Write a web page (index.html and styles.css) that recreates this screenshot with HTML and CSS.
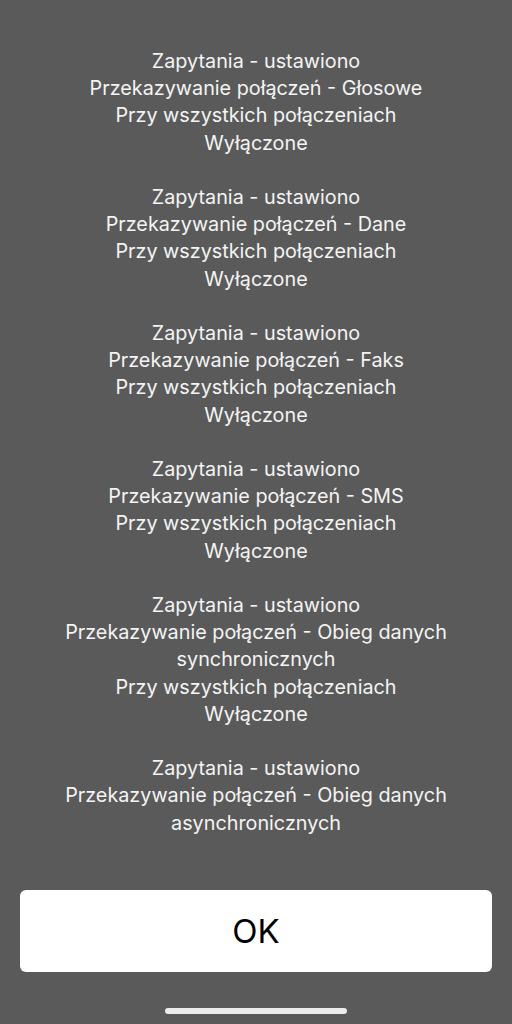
FILE: index.html
```html
<!DOCTYPE html>
<html lang="pl">
<head>
<meta charset="utf-8">
<link rel="stylesheet" href="styles.css">
</head>
<body>
<div class="screen">
  <div class="message">
    <p>Zapytania - ustawiono<br>Przekazywanie połączeń - Głosowe<br>Przy wszystkich połączeniach<br>Wyłączone</p>
    <p>Zapytania - ustawiono<br>Przekazywanie połączeń - Dane<br>Przy wszystkich połączeniach<br>Wyłączone</p>
    <p>Zapytania - ustawiono<br>Przekazywanie połączeń - Faks<br>Przy wszystkich połączeniach<br>Wyłączone</p>
    <p>Zapytania - ustawiono<br>Przekazywanie połączeń - SMS<br>Przy wszystkich połączeniach<br>Wyłączone</p>
    <p>Zapytania - ustawiono<br>Przekazywanie połączeń - Obieg danych synchronicznych<br>Przy wszystkich połączeniach<br>Wyłączone</p>
    <p>Zapytania - ustawiono<br>Przekazywanie połączeń - Obieg danych asynchronicznych</p>
  </div>
  <div class="actions">
    <button class="ok">OK</button>
  </div>
  <div class="home-bar"></div>
</div>
</body>
</html>
```
FILE: styles.css
```css
html, body {
  margin: 0;
  padding: 0;
  background: #5a5a5a;
}
.screen {
  width: 512px;
  height: 1024px;
  display: flex;
  flex-direction: column;
  align-items: center;
  font-family: Inter, Roboto, "Liberation Sans", sans-serif;
  overflow: hidden;
}
.message {
  width: 410px;
  padding-top: 48px;
  flex: 1;
  color: #f4f4f4;
  font-size: 19.8px;
  line-height: 27.2px;
  text-align: center;
}
.message p {
  margin: 0 0 27.2px 0;
}
.actions {
  width: 472px;
  margin-bottom: 36px;
}
.ok {
  display: block;
  width: 100%;
  height: 82px;
  border: none;
  border-radius: 6px;
  background: #ffffff;
  color: #000;
  font-family: Inter, Roboto, "Liberation Sans", sans-serif;
  font-size: 33px;
  padding: 0;
}
.home-bar {
  width: 182px;
  height: 6px;
  border-radius: 3px;
  background: #ececec;
  margin-bottom: 10px;
}
```
